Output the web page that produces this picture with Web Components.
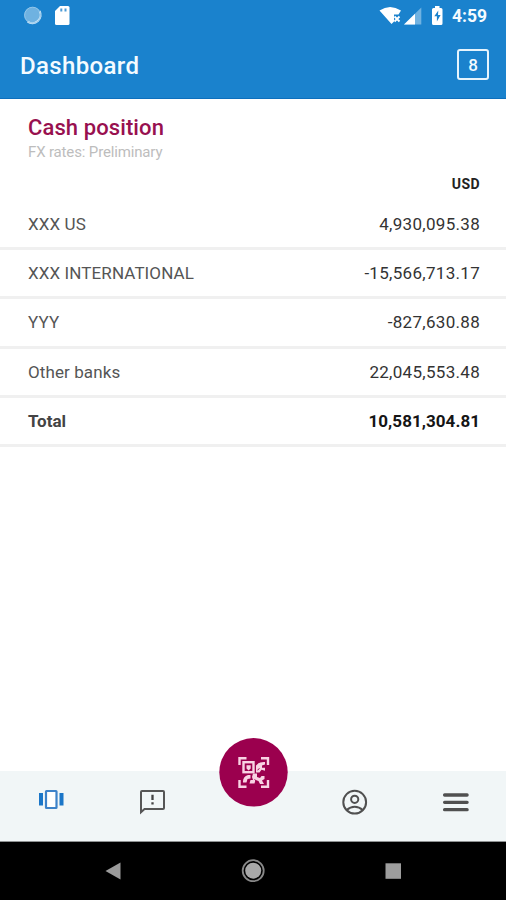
<!DOCTYPE html>
<html lang="en">
<head>
<meta charset="utf-8">
<title>Dashboard</title>
<style>
  body {
    margin: 0;
    font-family: Roboto, "Liberation Sans", sans-serif;
    background-color: #fff;
  }
</style>
</head>
<body>
<dashboard-app></dashboard-app>
<script>
class StatusBar extends HTMLElement {
    constructor() {
        super();
        this.attachShadow({ mode: 'open' });

        this.shadowRoot.innerHTML = `
            <style>
              :host {
                display: flex;
                justify-content: space-between;
                height: 32px;
                color: #f4fbff;
              }
              svg {
                display: block;
              }
              .system {
                display: flex;
                padding-right: 19px;
              }
              .time {
                font-size: 17.5px;
                font-weight: 700;
                line-height: 32px;
              }
            </style>
            <svg width="90" height="32" viewBox="0 0 90 32">
              <circle cx="32.600" cy="15.200" r="8.300" fill="#6fb2e1"/>
              <path d="M39.600 11a8.200 8.200 0 0 1-12 10.600" fill="none" stroke="#d5ebf9" stroke-width="2"/>
              <circle cx="32.600" cy="15.200" r="8" fill="none" stroke="#93c6ea" stroke-width="1"/>
              <path d="M60 6h8q1.500 0 1.500 1.500v16q0 1.500-1.500 1.500H56.500q-1.500 0-1.500-1.500V11z" fill="#fff"/>
              <path d="M60.300 8.500h2v3h-2zM64.500 8.500h2v3h-2z" fill="#4c9bd5"/>
            </svg>
            <div class="system">
              <svg width="73" height="32" viewBox="380 0 73 32">
                <path d="M380.500 10.500Q391 3.500 402 10.500L399.500 14.500H395V21.500L392.500 24z" fill="#fff"/>
                <path d="M395.500 16.500l5 5M400.500 16.500l-5 5" stroke="#fff" stroke-width="1.900"/>
                <path d="M422.300 7.500V24.500H405z" fill="#70b2e1"/>
                <path d="M416 13.800V24.500H405z" fill="#fff"/>
                <path d="M436 6h4.500v2H442q1.500 0 1.500 1.500v14q0 1.500-1.500 1.500h-7.500q-1.500 0-1.500-1.500v-14q0-1.500 1.500-1.500H436z" fill="#fff"/>
                <path d="M439.300 10.500l-4 5.800h2.600v5.200l3.700-6.600h-2.600z" fill="#1a82cd"/>
              </svg>
              <span class="time">4:59</span>
            </div>
        `
    }
}

class AppHeader extends HTMLElement {
    constructor() {
        super();
        this.attachShadow({ mode: 'open' });

        this.shadowRoot.innerHTML = `
            <style>
              :host {
                display: flex;
                justify-content: space-between;
                align-items: center;
                height: 67px;
                box-sizing: border-box;
                padding: 0 17px 1px 20px;
                border-bottom: 1px solid #0d6fbd;
                color: #f4fbff;
              }
              .title {
                font-size: 24px;
                font-weight: 500;
                line-height: 30px;
                letter-spacing: 0.35px;
                padding-top: 2px;
              }
              .count {
                width: 32px;
                height: 31px;
                box-sizing: border-box;
                border: 2px solid #e6f4fd;
                border-radius: 3px;
                font-size: 17px;
                font-weight: 500;
                line-height: 28px;
                text-align: center;
              }
            </style>
            <div class="title"><slot></slot></div>
            <div class="count"><slot name="count"></slot></div>
        `
    }
}

class BalanceRow extends HTMLElement {
    constructor() {
        super();
        this.attachShadow({ mode: 'open' });

        this.shadowRoot.innerHTML = `
            <style>
              :host {
                display: flex;
                justify-content: space-between;
                align-items: center;
                height: 49.2px;
                box-sizing: border-box;
                padding: 0 26px 0 28px;
                border-bottom: 3px solid #f0f0f0;
                font-size: 17px;
                letter-spacing: 0.1px;
                color: #555;
              }
              :host([total]) {
                font-weight: 700;
                letter-spacing: 0;
                color: #444;
              }
              .amount {
                color: #333;
                letter-spacing: 0.3px;
              }
              :host([total]) .amount {
                color: #151515;
                letter-spacing: 0.05px;
              }
            </style>
            <span><slot></slot></span>
            <span class="amount"><slot name="amount"></slot></span>
        `
    }
}

class CashPosition extends HTMLElement {
    constructor() {
        super();
        this.attachShadow({ mode: 'open' });

        this.shadowRoot.innerHTML = `
            <style>
              :host {
                display: block;
                padding-top: 15px;
              }
              .heading, .rates {
                padding-left: 28px;
              }
              .heading {
                font-size: 22px;
                font-weight: 500;
                line-height: 28px;
                letter-spacing: 0.1px;
                color: #98104f;
              }
              .rates {
                font-size: 15px;
                line-height: 21px;
                letter-spacing: -0.15px;
                color: #bdbdbd;
              }
              .currency {
                padding: 11px 26px 0 0;
                font-size: 14px;
                font-weight: 700;
                line-height: 20px;
                letter-spacing: 0.4px;
                text-align: right;
                color: #222;
              }
              .rows {
                padding-top: 7px;
              }
            </style>
            <div class="heading">Cash position</div>
            <div class="rates">FX rates: Preliminary</div>
            <div class="currency">USD</div>
            <div class="rows"><slot></slot></div>
        `
    }
}

class TabBar extends HTMLElement {
    constructor() {
        super();
        this.attachShadow({ mode: 'open' });

        this.shadowRoot.innerHTML = `
            <style>
              :host {
                display: grid;
                grid-template-columns: repeat(5, 1fr);
                justify-items: center;
                height: 71px;
                box-sizing: border-box;
                background-color: #f1f6f7;
                border-bottom: 1px solid #8f9293;
              }
              svg {
                display: block;
              }
              .tab {
                margin-top: 15px;
              }
              /* the scan button sticks out over the top edge of the bar */
              .scan {
                margin-top: -34px;
              }
            </style>
            <svg class="tab" width="32" height="32" viewBox="35 786 32 32">
              <path d="M39 793h4v12.500h-4zM59.500 793h4v12.500h-4z" fill="#1b76c8"/>
              <rect x="46" y="791" width="10.500" height="17" rx="0.500" fill="#fff" stroke="#3d82c9" stroke-width="2.200"/>
            </svg>
            <svg class="tab" width="32" height="32" viewBox="136 786 32 32">
              <path d="M141 812.300V792q0-1 1-1h21q1 0 1 1v16q0 1-1 1h-18.500z" fill="none" stroke="#565656" stroke-width="2"/>
              <path d="M152.500 794.800v5.200M152.500 802.200v2.400" stroke="#444" stroke-width="2.300"/>
            </svg>
            <svg class="scan" width="70" height="70" viewBox="0 0 70 70">
              <circle cx="35.500" cy="35.300" r="34.200" fill="#9b004e"/>
              <g fill="none" stroke="#f8d3e3" stroke-width="2.400">
                <path d="M21.500 28v-6.700h7M43 21.300h7v6.700M50 43v6.700h-7M28.500 49.700h-7V43"/>
                <rect x="25.500" y="25.200" width="10" height="10"/>
              </g>
              <g fill="#f8d3e3">
                <path d="M28.500 28.300h4.200v3.200l-2.100 2-2.100-2z"/>
                <path d="M38 28.500q3-4 9-3.500v2.500l-3 1v2.300h3v3l-3.500-1-2 2.700H38z"/>
                <path d="M25 45.500q-.5-5.500 5-7.500h2.500v3.500l-3 .5-1 3.500zM35 36.500h4v3.500l3 1 1.500-2h3v3l-2.500 1.500 2 3.500h-4l-1.500-3-3-1-1 3.500h-5l1-3.500h2.500l-1-3z"/>
              </g>
              <path d="M36.500 42.500l2 1.500M39.500 33l2-1.500" stroke="#9b004e" stroke-width="1"/>
            </svg>
            <svg class="tab" width="32" height="32" viewBox="338.300 786 32 32">
              <g fill="none" stroke="#505050" stroke-width="2">
                <circle cx="355" cy="802.200" r="11.400"/>
                <circle cx="355" cy="799.300" r="3.600"/>
                <path d="M347 810q3.500-3.300 8-3.300t8 3.300"/>
              </g>
            </svg>
            <svg class="tab" width="32" height="32" viewBox="439.400 786 32 32">
              <path d="M445 795h22.500M445 802.300h22.500M445 809.700h22.500" stroke="#505050" stroke-width="3.300" stroke-linecap="round"/>
            </svg>
        `
    }
}

class NavigationBar extends HTMLElement {
    constructor() {
        super();
        this.attachShadow({ mode: 'open' });

        this.shadowRoot.innerHTML = `
            <style>
              :host {
                display: flex;
                justify-content: space-between;
                align-items: center;
                height: 58px;
                box-sizing: border-box;
                padding: 0 99px;
                background-color: #000;
              }
              svg {
                display: block;
              }
            </style>
            <svg width="28" height="28" viewBox="0 0 28 28">
              <path d="M21.500 5.500v17L6.500 14z" fill="#9b9b9b"/>
            </svg>
            <svg width="28" height="28" viewBox="0 0 28 28">
              <circle cx="14.200" cy="13.700" r="8" fill="#a8a8a8"/>
              <circle cx="14.200" cy="13.700" r="10.500" fill="none" stroke="#888" stroke-width="1.800"/>
            </svg>
            <svg width="28" height="28" viewBox="0 0 28 28">
              <rect x="6.500" y="6.300" width="15.500" height="15.500" fill="#9d9d9d"/>
            </svg>
        `
    }
}

class DashboardApp extends HTMLElement {
    constructor() {
        super();
        this.attachShadow({ mode: 'open' });

        this.shadowRoot.innerHTML = `
            <style>
              :host {
                display: flex;
                flex-direction: column;
                width: 506px;
                height: 900px;
                overflow: hidden;
              }
              .top {
                background-color: #1a82cd;
              }
              cash-position {
                flex-grow: 1;
              }
            </style>
            <div class="top">
              <status-bar></status-bar>
              <app-header>Dashboard<span slot="count">8</span></app-header>
            </div>
            <cash-position>
              <balance-row>XXX US<span slot="amount">4,930,095.38</span></balance-row>
              <balance-row>XXX INTERNATIONAL<span slot="amount">-15,566,713.17</span></balance-row>
              <balance-row>YYY<span slot="amount">-827,630.88</span></balance-row>
              <balance-row>Other banks<span slot="amount">22,045,553.48</span></balance-row>
              <balance-row total>Total<span slot="amount">10,581,304.81</span></balance-row>
            </cash-position>
            <tab-bar></tab-bar>
            <navigation-bar></navigation-bar>
        `
    }
}

customElements.define('status-bar', StatusBar)
customElements.define('app-header', AppHeader)
customElements.define('balance-row', BalanceRow)
customElements.define('cash-position', CashPosition)
customElements.define('tab-bar', TabBar)
customElements.define('navigation-bar', NavigationBar)
customElements.define('dashboard-app', DashboardApp)
</script>
</body>
</html>
